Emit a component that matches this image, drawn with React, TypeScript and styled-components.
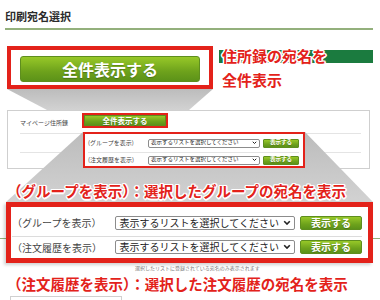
import React from 'react';
import styled, { createGlobalStyle } from 'styled-components';

const GlobalStyle = createGlobalStyle`
  html, body {
    margin: 0;
    padding: 0;
    background: #fff;
  }
  body {
    width: 380px;
    height: 300px;
    overflow: hidden;
    font-family: "Noto Sans CJK JP", "Noto Sans", sans-serif;
    color: #333;
  }
`;

const RED = '#e3221a';
const OUTLINE =
  '1.5px 0 #fff, -1.5px 0 #fff, 0 1.5px #fff, 0 -1.5px #fff, 1px 1px #fff, -1px -1px #fff, 1px -1px #fff, -1px 1px #fff';

const Page = styled.div`
  position: relative;
  width: 380px;
  height: 300px;
  overflow: hidden;
`;

const Header = styled.div`
  box-sizing: border-box;
  height: 30px;
  margin: 0 7px 0 5px;
  padding-top: 4px;
  display: flex;
  align-items: center;
  border-bottom: 2px solid #93b07c;
`;

const Title = styled.h1`
  margin: 0;
  font-size: 11px;
  font-weight: 700;
  color: #2b2b2b;
`;

const Projection = styled.svg`
  position: absolute;
  left: 0;
  top: 0;
  z-index: 1;
  pointer-events: none;
`;

const CalloutRow = styled.div`
  display: flex;
  align-items: flex-start;
  margin-top: 16px;
  height: 43px;
`;

const BigFrame = styled.div`
  position: relative;
  z-index: 2;
  box-sizing: border-box;
  display: flex;
  width: 206px;
  height: 43px;
  margin-left: 7px;
  padding: 6px 9px 3px 9px;
  border: 4px solid ${RED};
  background: #fff;
`;

const GreenButton = styled.div<{ $size: number; $radius?: number }>`
  flex: 1;
  display: flex;
  align-items: center;
  justify-content: center;
  border-radius: ${(p) => p.$radius ?? 3}px;
  background: linear-gradient(#97c828, #6ea21c 60%, #5c9219);
  border: 1px solid #5e8e1e;
  box-sizing: border-box;
  color: #fff;
  font-size: ${(p) => p.$size}px;
  font-weight: 700;
  line-height: 1;
  white-space: nowrap;
  text-shadow: 0 1px 1px rgba(0, 0, 0, 0.25);
`;

const Note = styled.div`
  position: relative;
  z-index: 2;
  flex: 1;
  margin: 1px 7px 0 6px;
`;

const NoteLine = styled.div<{ $band?: boolean }>`
  height: 18px;
  padding-left: 3px;
  font-size: 15px;
  line-height: 18px;
  font-weight: 700;
  color: ${RED};
  text-shadow: ${(p) => (p.$band ? OUTLINE : 'none')};
  background: ${(p) =>
    p.$band ? 'linear-gradient(#1b7b3f, #1b7b3f) 0 3px / 100% 13px no-repeat' : 'none'};
  & + & {
    margin-top: 6px;
  }
`;

const Panel = styled.div`
  box-sizing: border-box;
  height: 59px;
  margin: 21px 10px 0 7px;
  padding: 0 8px 0 12px;
  border: 1px solid #cfcfcf;
  background: #fff;
`;

const PanelTop = styled.div`
  display: flex;
  align-items: flex-start;
  height: 22px;
  border-bottom: 1px solid #e4e4e4;
`;

const MiniLabel = styled.span<{ $w: number }>`
  width: ${(p) => p.$w}px;
  flex: none;
  font-size: 6px;
  line-height: 8px;
  color: #444;
  white-space: nowrap;
`;

const MiniFrame = styled.div`
  position: relative;
  z-index: 2;
  display: flex;
  width: 86px;
  height: 15px;
  box-sizing: border-box;
  margin-top: 2px;
  border: 2px solid ${RED};
  background: #fff;
`;

const PanelLower = styled.div`
  display: flex;
  height: 36px;
  margin-top: -2px;
  padding-left: 63px;
  background: linear-gradient(#e4e4e4, #e4e4e4) 0 20px / 100% 1px no-repeat;
`;

const HiliteBox = styled.div`
  position: relative;
  z-index: 2;
  box-sizing: border-box;
  width: 222px;
  height: 36px;
  padding: 0 4px 0 3px;
  border: 2px solid ${RED};
  background: #fff;
`;

const MiniRow = styled.div<{ $h: number; $line?: boolean }>`
  display: flex;
  align-items: center;
  gap: 3px;
  height: ${(p) => p.$h}px;
  border-bottom: ${(p) => (p.$line ? '1px solid #e4e4e4' : 'none')};
`;

const Select = styled.div<{ $w: number; $h: number; $size: number }>`
  display: flex;
  align-items: center;
  justify-content: space-between;
  box-sizing: border-box;
  width: ${(p) => p.$w}px;
  height: ${(p) => p.$h}px;
  padding: 0 ${(p) => p.$size * 0.35}px;
  border: 1px solid #8c8c8c;
  border-radius: 2px;
  background: #fff;
  font-size: ${(p) => p.$size}px;
  line-height: 1;
  color: #222;
  white-space: nowrap;
  overflow: hidden;
`;

const ButtonSlot = styled.div<{ $w: number; $h: number }>`
  display: flex;
  width: ${(p) => p.$w}px;
  height: ${(p) => p.$h}px;
`;

const Caption = styled.div<{ $mt: number }>`
  position: relative;
  z-index: 2;
  margin-top: ${(p) => p.$mt}px;
  padding-left: 7px;
  height: 18px;
  font-size: 14.5px;
  line-height: 18px;
  font-weight: 700;
  color: ${RED};
  white-space: nowrap;
  text-shadow: ${OUTLINE};
`;

const FrameWrap = styled.div`
  margin-top: 2px;
  background: linear-gradient(#93b07c, #93b07c) 0 36px / 100% 1px no-repeat;
`;

const BigRowsFrame = styled.div`
  position: relative;
  z-index: 2;
  box-sizing: border-box;
  width: 367px;
  height: 61px;
  margin-left: 6px;
  padding: 0 6px 0 1px;
  border: 5px solid ${RED};
  background: #fff;
  box-shadow: -2px 2px 3px rgba(0, 0, 0, 0.18);
`;

const BigRow = styled.div<{ $h: number; $pt?: number; $line?: boolean }>`
  display: flex;
  align-items: center;
  box-sizing: border-box;
  height: ${(p) => p.$h}px;
  padding-top: ${(p) => p.$pt ?? 0}px;
  border-bottom: ${(p) => (p.$line ? '1px solid #dcdcdc' : 'none')};
`;

const RowLabel = styled.span`
  width: 103px;
  flex: none;
  font-size: 10px;
  color: #444;
  white-space: nowrap;
`;

const Fine = styled.div`
  margin-top: 2px;
  padding-left: 135px;
  font-size: 5px;
  line-height: 6px;
  color: #777;
  white-space: nowrap;
`;

const StubBox = styled.div`
  width: 110px;
  height: 20px;
  margin: 3px 0 0 10px;
  border: 1px solid #d0d0d0;
`;

const Chevron = ({ size }: { size: number }) => (
  <svg width={size} height={size * 0.7} viewBox="0 0 10 7">
    <path d="M1.5 1.5 L5 5 L8.5 1.5" fill="none" stroke="#222" strokeWidth="2" />
  </svg>
);

export default function App() {
  return (
    <Page>
      <GlobalStyle />
      <Header>
        <Title>印刷宛名選択</Title>
      </Header>

      <Projection width={380} height={300}>
        <defs>
          <linearGradient id="shade" x1="0" y1="0" x2="0" y2="1">
            <stop offset="0" stopColor="#bcbcbc" />
            <stop offset="1" stopColor="#d2d2d2" />
          </linearGradient>
        </defs>
        <polygon points="7,89 213,89 189,110 47,110" fill="url(#shade)" />
        <polygon points="83,132 305,132 373,202 6,202" fill="url(#shade)" />
      </Projection>

      <CalloutRow>
        <BigFrame>
          <GreenButton $size={16}>全件表示する</GreenButton>
        </BigFrame>
        <Note>
          <NoteLine $band>住所録の宛名を</NoteLine>
          <NoteLine>全件表示</NoteLine>
        </Note>
      </CalloutRow>

      <Panel>
        <PanelTop>
          <MiniLabel $w={62} style={{ marginTop: 8 }}>
            マイページ住所録
          </MiniLabel>
          <MiniFrame>
            <GreenButton $size={7.5} $radius={0}>
              全件表示する
            </GreenButton>
          </MiniFrame>
        </PanelTop>
        <PanelLower>
          <HiliteBox>
            <MiniRow $h={18} $line>
              <MiniLabel $w={57}>(グループを表示)</MiniLabel>
              <Select $w={112} $h={9} $size={5.5}>
                表示するリストを選択してください
                <Chevron size={5} />
              </Select>
              <ButtonSlot $w={36} $h={9}>
                <GreenButton $size={5.5} $radius={1}>
                  表示する
                </GreenButton>
              </ButtonSlot>
            </MiniRow>
            <MiniRow $h={14}>
              <MiniLabel $w={57}>(注文履歴を表示)</MiniLabel>
              <Select $w={112} $h={9} $size={5.5}>
                表示するリストを選択してください
                <Chevron size={5} />
              </Select>
              <ButtonSlot $w={36} $h={9}>
                <GreenButton $size={5.5} $radius={1}>
                  表示する
                </GreenButton>
              </ButtonSlot>
            </MiniRow>
          </HiliteBox>
        </PanelLower>
      </Panel>

      <Caption $mt={13}>（グループを表示）：選択したグループの宛名を表示</Caption>

      <FrameWrap>
        <BigRowsFrame>
          <BigRow $h={30} $pt={2} $line>
            <RowLabel>（グループを表示）</RowLabel>
            <Select $w={180} $h={14} $size={10}>
              表示するリストを選択してください
              <Chevron size={8} />
            </Select>
            <ButtonSlot $w={62} $h={14} style={{ marginLeft: 5 }}>
              <GreenButton $size={10} $radius={2}>
                表示する
              </GreenButton>
            </ButtonSlot>
          </BigRow>
          <BigRow $h={20}>
            <RowLabel>（注文履歴を表示）</RowLabel>
            <Select $w={180} $h={14} $size={10}>
              表示するリストを選択してください
              <Chevron size={8} />
            </Select>
            <ButtonSlot $w={62} $h={14} style={{ marginLeft: 5 }}>
              <GreenButton $size={10} $radius={2}>
                表示する
              </GreenButton>
            </ButtonSlot>
          </BigRow>
        </BigRowsFrame>
      </FrameWrap>

      <Fine>選択したリストに登録されている宛名のみ表示されます</Fine>

      <Caption $mt={4}>（注文履歴を表示）：選択した注文履歴の宛名を表示</Caption>

      <StubBox />
    </Page>
  );
}
